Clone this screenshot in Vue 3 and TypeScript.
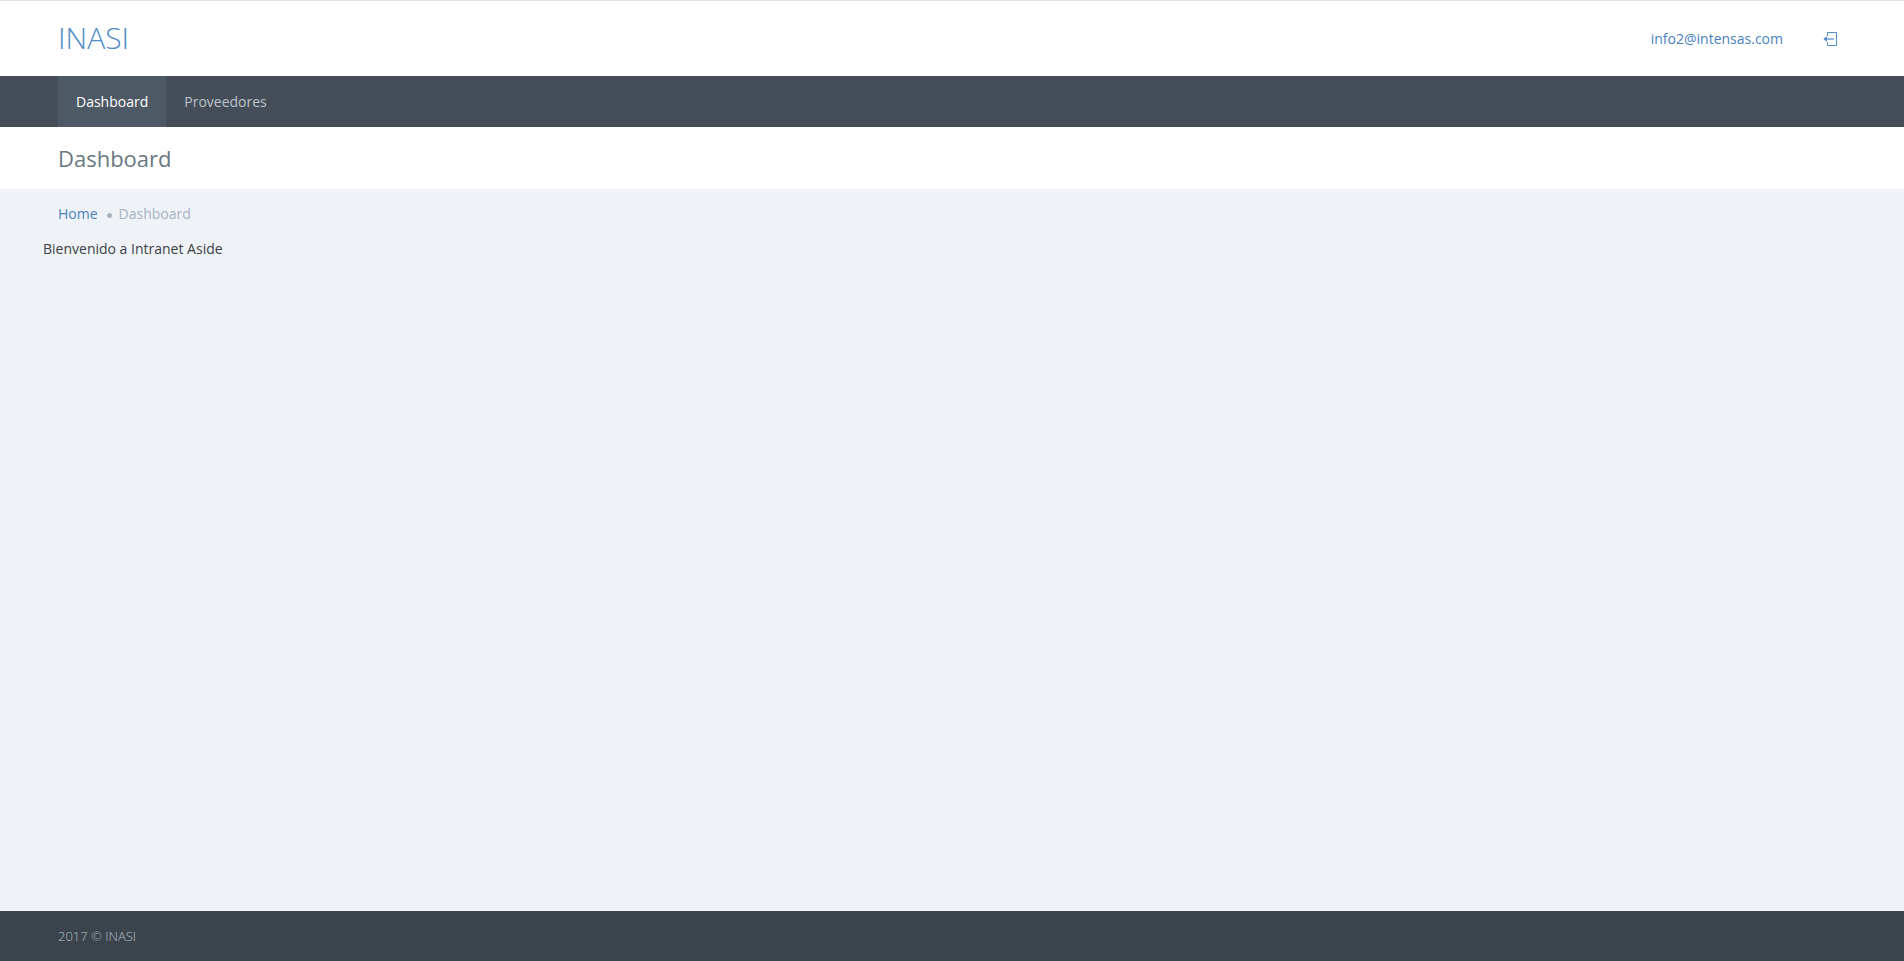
<template>
    <div class="page">
        <header class="top">
            <a class="logo">INASI</a>
            <div class="top-right">
                <a class="user">info2@intensas.com</a>
                <a class="logout">
                    <svg width="15" height="14" viewBox="0 0 15 14" fill="none">
                        <path d="M4.5 4V0.5H13.5V13.5H4.5V10" stroke="currentColor" />
                        <path d="M11 7H3" stroke="currentColor" stroke-width="1.2" />
                        <path d="M4 4.2L0.3 7L4 9.8Z" fill="currentColor" />
                    </svg>
                </a>
            </div>
        </header>

        <nav class="menu">
            <a
                v-for="item in menuItems"
                :key="item.label"
                class="menu-item"
                :class="{ active: item.active }"
            >
                {{ item.label }}
            </a>
        </nav>

        <div class="page-head">
            <h1>Dashboard</h1>
        </div>

        <main class="content">
            <ul class="breadcrumb">
                <li><a>Home</a></li>
                <li class="dot"></li>
                <li class="current">Dashboard</li>
            </ul>
            <p class="welcome">Bienvenido a Intranet Aside</p>
        </main>

        <footer class="footer">2017 © INASI</footer>
    </div>
</template>

<script setup lang="ts">
const menuItems = [
    { label: "Dashboard", active: true },
    { label: "Proveedores", active: false },
];
</script>

<style>
html,
body {
    margin: 0;
    padding: 0;
}
</style>

<style scoped>
.page {
    display: flex;
    flex-direction: column;
    min-height: 961px;
    box-sizing: border-box;
    background-color: #eff3f8;
    color: #3a3f45;
    font-family: "Open Sans", sans-serif;
    font-size: 14px;
}

.top {
    display: flex;
    justify-content: space-between;
    align-items: center;
    height: 75px;
    padding: 0 66px 0 58px;
    border-top: 1px solid #e0e0e0;
    background-color: #fff;
}

.logo {
    color: #4f8cc9;
    font-size: 30px;
    font-weight: 300;
    line-height: 36px;
    margin-bottom: 2px;
}

.top-right {
    display: flex;
    align-items: center;
    gap: 40px;
}

.user {
    color: #4a82c0;
    font-size: 14px;
}

.logout {
    display: flex;
    color: #4f8cc9;
}

.menu {
    display: flex;
    height: 51px;
    padding: 0 58px;
    background-color: #444d58;
}

.menu-item {
    display: flex;
    align-items: center;
    padding: 0 18px;
    color: #bcc2cb;
}

.menu-item.active {
    background-color: #4e5966;
    color: #fff;
}

.page-head {
    display: flex;
    align-items: center;
    height: 62px;
    padding: 0 58px;
    background-color: #fff;
}

.page-head h1 {
    margin: 0;
    color: #697882;
    font-size: 22px;
    font-weight: 400;
}

.content {
    flex: 1;
}

.breadcrumb {
    display: flex;
    align-items: center;
    margin: 15px 0 0;
    padding: 0 58px;
    list-style: none;
    line-height: 20px;
}

.breadcrumb a {
    color: #4a82c0;
}

.dot {
    width: 5px;
    height: 5px;
    margin: 2px 7px 0 9px;
    border-radius: 50%;
    background-color: #a7b2c0;
}

.current {
    color: #a7b2c0;
}

.welcome {
    margin: 15px 0 0 43px;
    line-height: 20px;
}

.footer {
    display: flex;
    align-items: center;
    height: 50px;
    padding: 0 58px;
    background-color: #3b434c;
    color: #b4c1ca;
    font-size: 13px;
    font-weight: 300;
}
</style>
